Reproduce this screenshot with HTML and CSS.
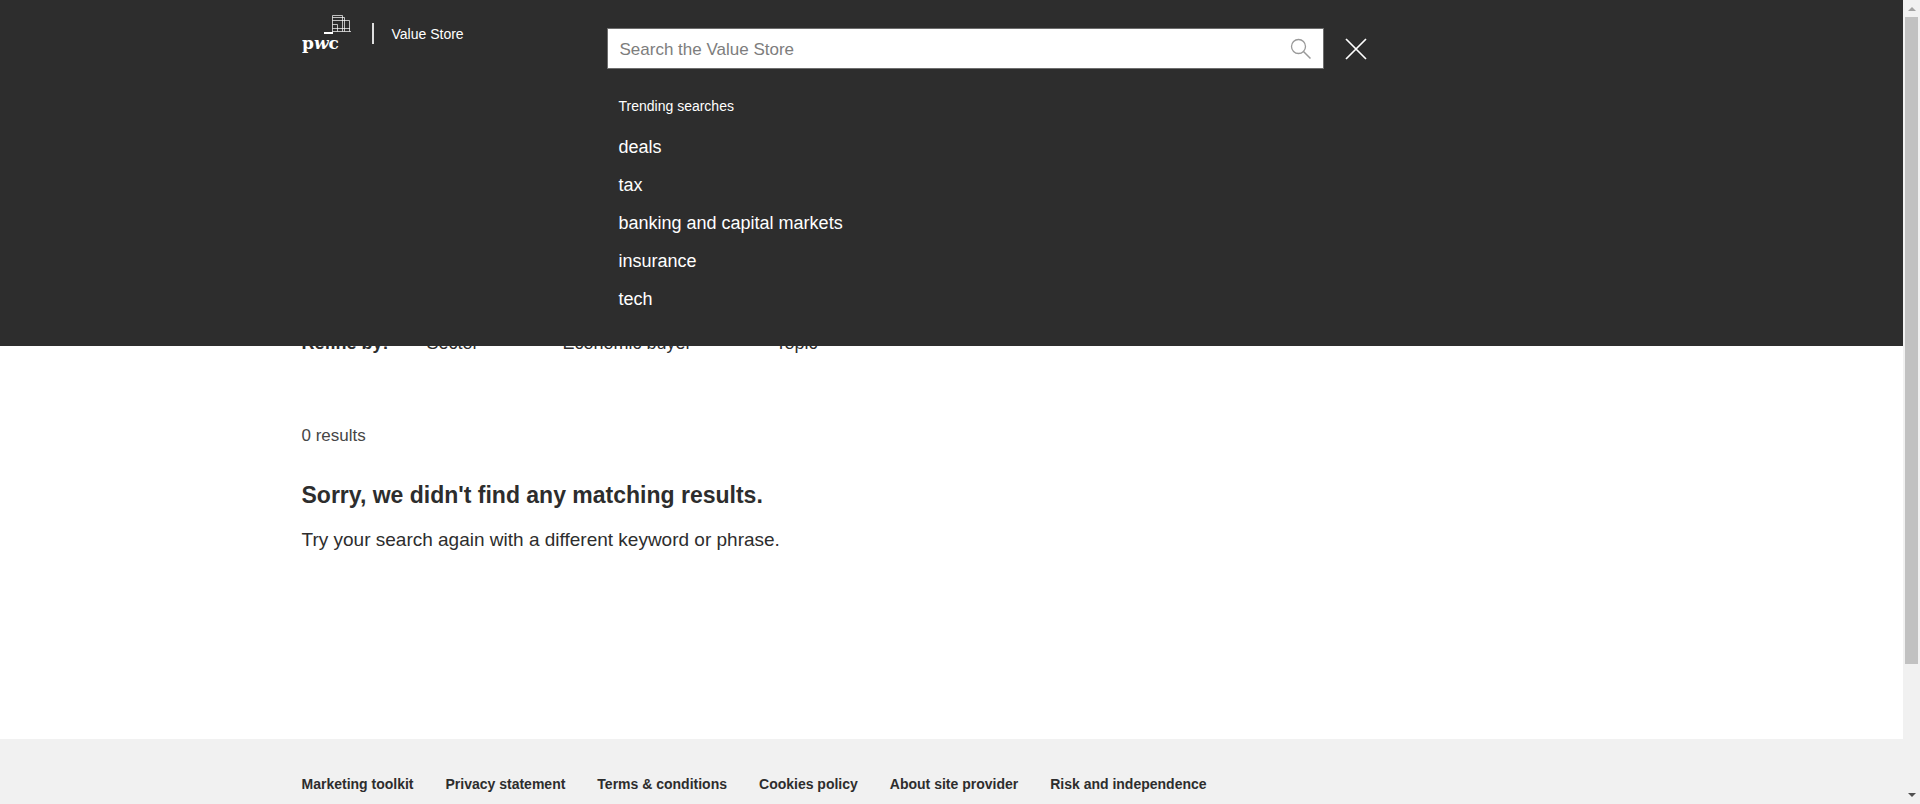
FILE: index.html
```html
<!DOCTYPE html>
<html lang="en">
<head>
<meta charset="utf-8">
<title>Value Store</title>
<link rel="stylesheet" href="styles.css">
</head>
<body>
<div class="page">
  <header class="header">
    <div class="container header-inner">
      <div class="brand">
        <svg class="logo" viewBox="0 0 50 42" role="img" aria-label="pwc">
          <rect x="22" y="19" width="9" height="2" fill="#fff"/>
          <g fill="none" stroke="#fff" stroke-opacity="0.7" stroke-width="1">
            <path d="M30.500 18.500V2.500H40.500V18.500"/>
            <path d="M30.500 4.500H42.500V18.500M30.500 7.500H47.500V18.500"/>
            <path d="M30 18.500H49M30.500 11.500H35.500V18.500M30.500 15.500H48"/>
          </g>
          <text class="logo-text" x="0" y="36">p<tspan font-style="italic">w</tspan>c</text>
        </svg>
        <span class="divider"></span>
        <a class="site-name" href="#">Value Store</a>
      </div>
      <div class="search">
        <form class="search-row">
          <div class="search-box">
            <input class="search-input" type="text" placeholder="Search the Value Store" aria-label="Search the Value Store">
            <button class="icon-button" type="button" aria-label="Search">
              <svg width="22" height="22" viewBox="0 0 22 22" fill="none" stroke="#999"><circle cx="8.500" cy="8.500" r="7" stroke-width="1.300"/><path d="M13.500 13.500L20.500 20.500" stroke-width="1.500"/></svg>
            </button>
          </div>
          <button class="icon-button" type="button" aria-label="Close">
            <svg width="22" height="22" viewBox="0 0 22 22" fill="none" stroke="#fff" stroke-width="1.700"><path d="M1 1L21 21M21 1L1 21"/></svg>
          </button>
        </form>
        <div class="trending">
          <h2 class="trending-title">Trending searches</h2>
          <ul class="trending-list">
            <li><a href="#">deals</a></li>
            <li><a href="#">tax</a></li>
            <li><a href="#">banking and capital markets</a></li>
            <li><a href="#">insurance</a></li>
            <li><a href="#">tech</a></li>
          </ul>
        </div>
      </div>
    </div>
  </header>
  <main class="main">
    <div class="container">
      <div class="filters">
        <strong class="refine">Refine by:</strong>
        <button class="filter" type="button">Sector</button>
        <button class="filter" type="button">Economic buyer</button>
        <button class="filter" type="button">Topic</button>
      </div>
      <p class="count">0 results</p>
      <h1 class="headline">Sorry, we didn't find any matching results.</h1>
      <p class="hint">Try your search again with a different keyword or phrase.</p>
    </div>
  </main>
  <footer class="footer">
    <nav class="container footer-links">
      <a href="#">Marketing toolkit</a>
      <a href="#">Privacy statement</a>
      <a href="#">Terms &amp; conditions</a>
      <a href="#">Cookies policy</a>
      <a href="#">About site provider</a>
      <a href="#">Risk and independence</a>
    </nav>
  </footer>
</div>
<div class="scrollbar" aria-hidden="true">
  <span class="arrow arrow-up"></span>
  <div class="track"><div class="thumb"></div></div>
  <span class="arrow arrow-down"></span>
</div>
</body>
</html>
```
FILE: styles.css
```css
* {
  box-sizing: border-box;
}

body {
  display: flex;
  height: 100vh;
  margin: 0;
  overflow: hidden;
  background: #fff;
  color: #2d2d2d;
  font-family: "Liberation Sans", Arial, sans-serif;
}

a {
  color: inherit;
  text-decoration: none;
}

button {
  padding: 0;
  border: 0;
  background: none;
  color: inherit;
  font-family: inherit;
}

.page {
  position: relative;
  display: flex;
  flex: 1;
  flex-direction: column;
}

.container {
  width: 100%;
  max-width: 1300px;
  margin: 0 auto;
}

/* Search panel that opens over the page */
.header {
  position: absolute;
  top: 0;
  right: 0;
  left: 0;
  z-index: 1;
  padding-bottom: 28px;
  background: #2d2d2d;
  color: #fff;
}

.header-inner {
  display: flex;
}

.brand {
  display: flex;
  align-items: flex-start;
  width: 305px;
  padding-top: 13px;
}

.logo {
  width: 50px;
  height: 42px;
}

.logo-text {
  fill: #fff;
  font: bold 17px "DejaVu Serif", serif;
}

.divider {
  width: 2px;
  height: 21px;
  margin: 10px 18px 0 20px;
  background: #dedede;
}

.site-name {
  margin-top: 11px;
  font-size: 14px;
  line-height: 20px;
}

.search {
  flex: 1;
  padding-top: 28px;
}

.search-row {
  display: flex;
  align-items: center;
  gap: 21px;
}

.search-box {
  display: flex;
  align-items: center;
  width: 717px;
  height: 41px;
  padding-right: 11px;
  border: 1px solid #6d6d6d;
  background: #fff;
}

.search-input {
  flex: 1;
  height: 100%;
  padding: 2px 12px 0;
  border: 0;
  outline: 0;
  background: none;
  font-family: inherit;
  font-size: 17px;
}

.search-input::placeholder {
  color: #7d7d7d;
}

.icon-button {
  display: flex;
}

.trending {
  padding: 27px 12px 0;
}

.trending-title {
  margin: 0 0 12px;
  font-size: 14px;
  font-weight: 400;
  line-height: 20px;
}

.trending-list {
  margin: 0;
  padding: 0;
  font-size: 18px;
  line-height: 38px;
  list-style: none;
}

.main {
  flex: 1;
  padding-top: 332px;
}

.filters {
  display: flex;
  font-size: 18px;
  line-height: 22px;
}

.refine {
  width: 125px;
}

.filter {
  margin-right: 84px;
  font-size: 18px;
  line-height: 22px;
}

.count {
  margin: 70px 0 0;
  color: #464646;
  font-size: 17px;
  line-height: 24px;
}

.headline {
  margin: 32px 0 0;
  font-size: 23px;
  line-height: 30px;
}

.hint {
  margin: 18px 0 0;
  font-size: 19px;
  line-height: 24px;
}

.footer {
  height: 65px;
  padding-top: 35px;
  background: #f1f1f1;
}

.footer-links {
  display: flex;
  gap: 32px;
  font-size: 14px;
  font-weight: 700;
  line-height: 20px;
}

.scrollbar {
  display: flex;
  flex-direction: column;
  align-items: center;
  justify-content: space-between;
  width: 17px;
  background: #f1f1f1;
}

.track {
  flex: 1;
  width: 13px;
  margin: 6px 0;
}

.thumb {
  height: 84%;
  background: #c1c1c1;
}

.arrow {
  border: 4px solid transparent;
}

.arrow-up {
  margin-top: 3px;
  border-bottom-color: #a3a3a3;
}

.arrow-down {
  margin-bottom: 3px;
  border-top-color: #505050;
}
```
